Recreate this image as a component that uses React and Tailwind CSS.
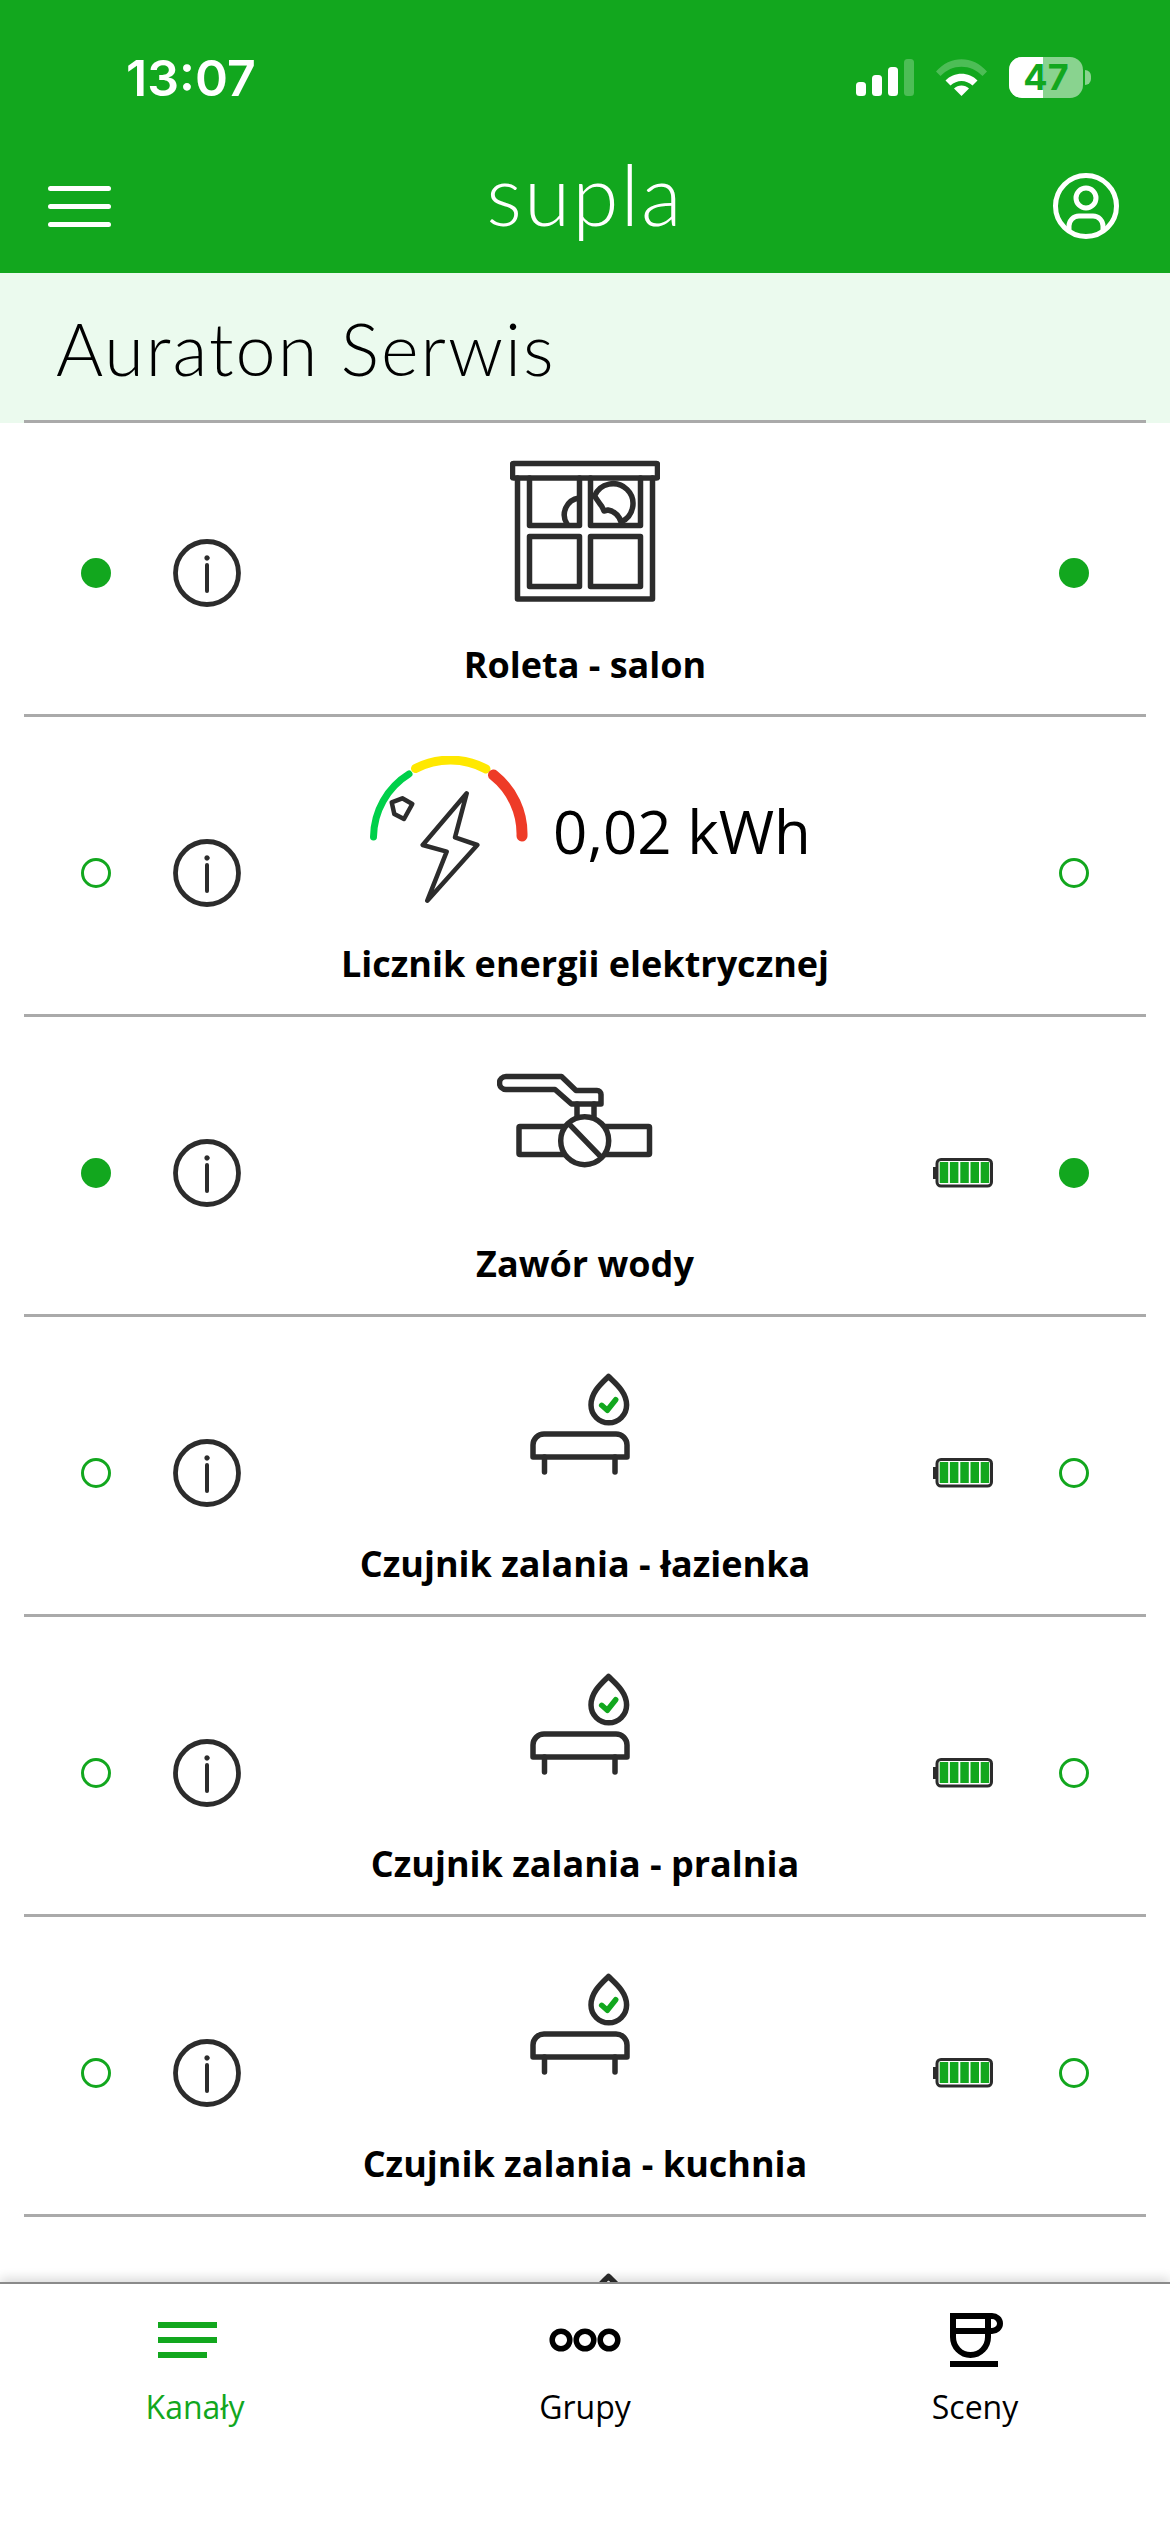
import React from 'react'

const INK = '#2c2c2c'
const GREEN = '#12a71e'

function WindowIcon() {
  return (
    <svg width="150" height="142" viewBox="0 0 150 142" fill="none" stroke={INK} strokeWidth="5.5" strokeLinejoin="round" strokeLinecap="round">
      <rect x="2.5" y="3.5" width="145" height="14.5" rx="1" />
      <path d="M7.5 18V139H142.5V18" />
      <path d="M19.5 18V65.5H69.5V18" />
      <path d="M80.5 18V65.5H130.5V18" />
      <rect x="19.5" y="76.5" width="50" height="50" />
      <rect x="80.5" y="76.5" width="50" height="50" />
      <path d="M69 38A17 17 0 0 0 57 64" />
      <path d="M84.5 36A20 20 0 1 1 111 62Q108 52 98 50L94 51Q92 46 90 44L84.5 36" />
    </svg>
  )
}

function GaugeIcon() {
  return (
    <svg width="160" height="147" viewBox="0 0 160 147" fill="none" strokeLinecap="round">
      <path d="M3.5 81A75 75 0 0 1 39 18" stroke="#00d04a" strokeWidth="7" />
      <path d="M45.5 12.5A76 76 0 0 1 116 13" stroke="#ffe800" strokeWidth="9" />
      <path d="M123.5 19A75 75 0 0 1 152 80" stroke="#ee3b27" strokeWidth="11" />
      <g stroke={INK} strokeWidth="4.5" strokeLinejoin="round">
        <path d="M96.7 37.3L52.7 89L76.7 95.7L57.3 144.7L107.3 89L85 81.3Z" />
        <path d="M21.7 46.3L32.3 42.3L42.3 48L34 63L24.3 58Z" />
      </g>
    </svg>
  )
}

function ValveIcon() {
  return (
    <svg width="156" height="96" viewBox="0 0 156 96" fill="none" stroke={INK} strokeWidth="5.5" strokeLinejoin="round" strokeLinecap="round">
      <path d="M9 3.5H64.5L79 17.5H100a4 4 0 0 1 4 4V31H74.5L58 16.5H9a6.5 6.5 0 0 1 0-13Z" />
      <path d="M80 31V46M97 31V46" />
      <rect x="22" y="53.5" width="130.5" height="28" rx="1" />
      <circle cx="87.7" cy="67.7" r="24" fill="#fff" />
      <path d="M72.7 51.7L102.7 82.7" />
    </svg>
  )
}

function SensorIcon() {
  return (
    <svg width="100" height="102" viewBox="0 0 100 102" fill="none" stroke={INK} strokeWidth="5.5" strokeLinejoin="round" strokeLinecap="round">
      <path d="M78.5 3.5C72 10 61 19 61 32A17.8 17.8 0 0 0 96.6 32C96.6 19 85 10 78.5 3.5Z" />
      <path d="M71.7 32.3L77.3 37.3L85.7 26.7" stroke={GREEN} strokeWidth="5.5" />
      <path d="M3 84V72a11 11 0 0 1 11-11H86a11 11 0 0 1 11 11V84Z" />
      <path d="M14.5 84V99M85 84V99" />
    </svg>
  )
}

function InfoIcon() {
  return (
    <svg width="68" height="68" viewBox="0 0 68 68" fill="none" stroke={INK} strokeWidth="4.8" strokeLinecap="round">
      <circle cx="34" cy="34" r="31.5" />
      <path d="M34 26V52" strokeWidth="4" />
      <circle cx="34" cy="19" r="2.4" fill={INK} strokeWidth="0.5" />
    </svg>
  )
}

function BatteryIcon() {
  return (
    <svg width="60" height="30" viewBox="0 0 60 30">
      <rect x="0" y="9" width="4" height="12" fill={INK} />
      <rect x="4" y="1.5" width="54.5" height="26.5" rx="4" fill="#fff" stroke={INK} strokeWidth="3" />
      {[6.7, 16.9, 27.3, 37.5, 47.7].map(x => (
        <rect key={x} x={x} y="4" width="8.5" height="21" fill={GREEN} />
      ))}
    </svg>
  )
}

function StatusDot({ on }) {
  return on
    ? <div className="w-[30px] h-[30px] rounded-full bg-[#12a71e] shrink-0" />
    : <div className="w-[30px] h-[30px] rounded-full border-[3px] border-[#12a71e] shrink-0" />
}

function ChannelRow({ item }) {
  const first = item.first
  return (
    <div className={`grid grid-cols-[300px_570px_300px] relative shrink-0 ${first ? 'h-[294px]' : 'h-[300px]'}`}>
      <div className={`flex items-center h-[66px] gap-[62px] pl-[81px] ${first ? 'mt-[117px]' : 'mt-[123px]'}`}>
        <StatusDot on={item.on} />
        <InfoIcon />
      </div>
      <div className="flex flex-col items-center">
        <div className={`flex justify-center ${first ? 'h-[209px]' : 'h-[214px]'} ${item.pad}`}>
          {item.icon}
        </div>
        <div className="h-[66px] leading-[66px] text-[36px] font-bold text-black whitespace-nowrap [font-family:'Open_Sans',sans-serif]">
          {item.name}
        </div>
      </div>
      <div className={`flex items-center justify-end h-[66px] gap-[66px] pr-[81px] ${first ? 'mt-[117px]' : 'mt-[123px]'}`}>
        {item.battery && <BatteryIcon />}
        <StatusDot on={item.on} />
      </div>
      <div className="absolute left-[24px] right-[24px] bottom-0 h-[3px] bg-[#aaaaaa]" />
    </div>
  )
}

const CHANNELS = [
  { name: 'Roleta - salon', on: true, first: true, pad: 'pt-[37px]', icon: <WindowIcon /> },
  {
    name: 'Licznik energii elektrycznej',
    pad: 'pt-[39px] pl-[11px]',
    icon: (
      <div className="flex items-start gap-[23px]">
        <GaugeIcon />
        <span className="mt-[25px] text-[60px] leading-[100px] text-black whitespace-nowrap [font-family:'Open_Sans',sans-serif]">0,02 kWh</span>
      </div>
    ),
  },
  { name: 'Zawór wody', on: true, battery: true, pad: 'pt-[56px] pr-[20px]', icon: <ValveIcon /> },
  { name: 'Czujnik zalania - łazienka', battery: true, pad: 'pt-[56px] pr-[10px]', icon: <SensorIcon /> },
  { name: 'Czujnik zalania - pralnia', battery: true, pad: 'pt-[56px] pr-[10px]', icon: <SensorIcon /> },
  { name: 'Czujnik zalania - kuchnia', battery: true, pad: 'pt-[56px] pr-[10px]', icon: <SensorIcon /> },
]

function StatusBar() {
  return (
    <div className="h-[117px] relative">
      <span className="absolute left-[126px] top-[50px] text-[50px] leading-[56px] font-semibold text-white [font-family:Inter,sans-serif]">13:07</span>
      <svg className="absolute left-[856px] top-[59px]" width="58" height="37" viewBox="0 0 58 37" fill="#fff">
        <rect x="0" y="23" width="10" height="14" rx="3.5" />
        <rect x="16" y="16" width="10" height="21" rx="3.5" />
        <rect x="32" y="8" width="10" height="29" rx="3.5" />
        <rect x="48" y="0" width="10" height="37" rx="3.5" opacity="0.25" />
      </svg>
      <svg className="absolute left-[936px] top-[59px]" width="51" height="37" viewBox="0 0 51 37">
        <path d="M0 12.5C14-4 37-4 51 12.5L46.5 17C35 4.5 16 4.5 4.5 17Z" fill="#fff" opacity="0.25" />
        <path d="M9.5 21.5C18 12.5 33 12.5 41.5 21.5L36.5 26.5C30 20.5 21 20.5 14.5 26.5Z" fill="#fff" />
        <path d="M18 29.5C22 25.5 29 25.5 33 29.5L25.5 37Z" fill="#fff" />
      </svg>
      <div className="absolute left-[1009px] top-[57px] w-[74px] h-[41px] rounded-[13px] overflow-hidden bg-white/50">
        <div className="w-[34px] h-full bg-white" />
      </div>
      <div className="absolute left-[1085px] top-[70px] w-[6px] h-[15px] rounded-r-full bg-white/50" />
      <span className="absolute left-[1009px] top-[57px] w-[74px] text-center text-[36px] leading-[41px] font-bold text-[#12a71e] [font-family:Inter,sans-serif]">47</span>
    </div>
  )
}

function NavBar() {
  return (
    <div className="h-[156px] relative">
      <svg className="absolute left-[48px] top-[69px]" width="63" height="41" viewBox="0 0 63 41" fill="#fff">
        <rect x="0" y="0" width="63" height="5" rx="2.5" />
        <rect x="0" y="18" width="63" height="5" rx="2.5" />
        <rect x="0" y="36" width="63" height="5" rx="2.5" />
      </svg>
      <span className="absolute left-0 right-0 top-[27px] text-center text-[84px] leading-[100px] tracking-[2px] font-light text-white [font-family:Lato,sans-serif]">supla</span>
      <svg className="absolute left-[1051px] top-[54px]" width="70" height="70" viewBox="0 0 70 70" fill="none" stroke="#fff" strokeWidth="5">
        <circle cx="35" cy="35" r="30.5" />
        <circle cx="35" cy="27" r="10" />
        <path d="M18 60V55a10 10 0 0 1 10-10H42a10 10 0 0 1 10 10V60" />
      </svg>
    </div>
  )
}

function TabBar() {
  return (
    <div className="h-[250px] shrink-0 grid grid-cols-3 bg-white border-t-2 border-[#8a8a8a] shadow-[0_-4px_10px_rgba(0,0,0,0.14)] relative pt-[29px] [font-family:'Open_Sans',sans-serif] text-[32px] leading-[40px]">
      <div className="flex flex-col items-center text-[#12a71e]">
        <div className="h-[54px] flex items-center">
          <svg className="-ml-[15px]" width="59" height="36" viewBox="0 0 59 36" fill={GREEN}>
            <rect x="0" y="0" width="59" height="6" />
            <rect x="0" y="15" width="59" height="6" />
            <rect x="0" y="30" width="49" height="6" />
          </svg>
        </div>
        <span className="mt-[20px]">Kanały</span>
      </div>
      <div className="flex flex-col items-center text-black">
        <div className="h-[54px] flex items-center">
          <svg width="72" height="24" viewBox="0 0 72 24" fill="none" stroke="#000" strokeWidth="5.5">
            <circle cx="12" cy="12" r="8.8" />
            <circle cx="36" cy="12" r="8.8" />
            <circle cx="60" cy="12" r="8.8" />
          </svg>
        </div>
        <span className="mt-[20px]">Grupy</span>
      </div>
      <div className="flex flex-col items-center text-black">
        <div className="h-[54px] flex items-center">
          <svg className="ml-[4px]" width="54" height="54" viewBox="0 0 54 54" fill="none" stroke="#000" strokeWidth="6">
            <path d="M3 3V24a17.5 18 0 0 0 35 0V3" />
            <path d="M0 3H42A8 7.5 0 0 1 42 18H3" />
            <rect x="0" y="48" width="48" height="6" fill="#000" stroke="none" />
          </svg>
        </div>
        <span className="mt-[20px]">Sceny</span>
      </div>
    </div>
  )
}

export default function App() {
  return (
    <div className="w-[1170px] h-[2532px] flex flex-col bg-white overflow-hidden">
      <div className="bg-[#12a71e] h-[273px] shrink-0">
        <StatusBar />
        <NavBar />
      </div>
      <div className="h-[150px] shrink-0 bg-[#ebfaee] relative flex items-center pl-[56px]">
        <span className="text-[72px] tracking-[2px] font-light text-black whitespace-nowrap [font-family:Lato,sans-serif]">Auraton Serwis</span>
        <div className="absolute left-[24px] right-[24px] bottom-0 h-[3px] bg-[#aaaaaa]" />
      </div>
      <div className="flex-1 min-h-0 overflow-hidden flex flex-col">
        {CHANNELS.map(item => <ChannelRow key={item.name} item={item} />)}
        <div className="flex justify-center pt-[56px] pr-[10px] shrink-0">
          <SensorIcon />
        </div>
      </div>
      <TabBar />
    </div>
  )
}
